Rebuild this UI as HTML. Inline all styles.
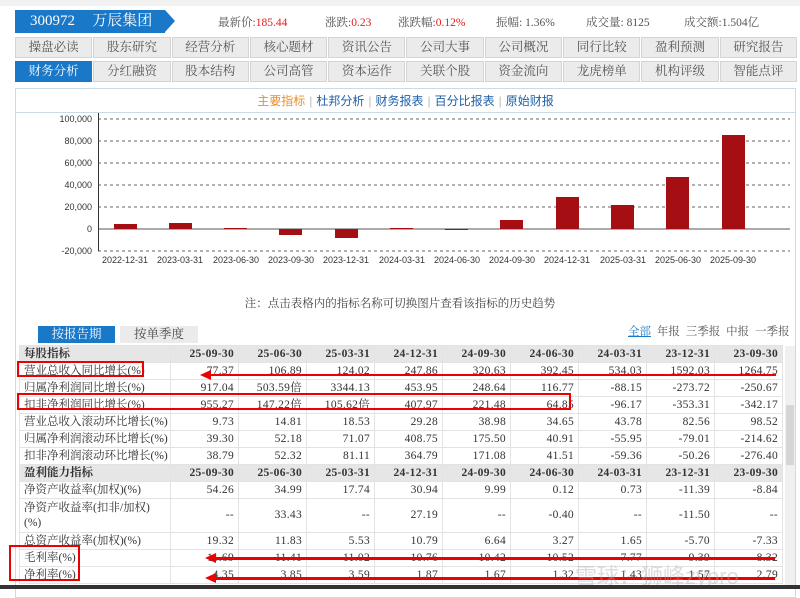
<!DOCTYPE html>
<html><head><meta charset="utf-8"><style>
*{margin:0;padding:0;box-sizing:border-box}
body{width:800px;height:589px;overflow:hidden;background:#fff;font-family:"Liberation Serif","Noto Serif CJK SC","Noto Sans CJK SC",serif;font-size:11px;color:#333;position:relative}
.abs{position:absolute}
.top{left:0;top:0;width:800px;height:6px;background:#f2f2f2}
.code{left:15px;top:10px;width:150px;height:23px;background:#1a78c8;color:#fff;font-size:15px;line-height:23px;padding-left:15px;word-spacing:2px}
.code:after{content:"";position:absolute;right:-10px;top:0;border-left:10px solid #1a78c8;border-top:11.5px solid transparent;border-bottom:11.5px solid transparent}
.stat{top:14px;font-size:11.5px;color:#555}
.stat b{font-weight:normal;color:#e02020}
.nav{left:15px;width:782px;display:flex;gap:1px}
.nav div{flex:1;height:21px;background:#ebebeb;border:1px solid #d4d4d4;text-align:center;line-height:19px;font-size:12.5px;color:#555}
.nav div.on{background:#1a78c8;color:#fff;border-color:#1a78c8}
.panel{left:15px;top:88px;width:781px;height:510px;border:1px solid #c8dbe6}
.tabs{left:16px;top:89px;width:779px;height:24px;border-bottom:1px solid #c8dbe6;text-align:center;line-height:24px;font-size:12px;color:#1d5fa8;font-family:"Liberation Sans","Noto Sans CJK SC",sans-serif}
.tabs .o{color:#f08c1e}.tabs .s{color:#bbb;margin:0 4px}
table{position:absolute;left:19px;top:345px;border-collapse:collapse;width:764px;table-layout:fixed}
td{height:17px;border:1px solid #e3e3e3;padding:0 4px;text-align:right;white-space:nowrap;font-size:11.5px;line-height:15px;letter-spacing:0.3px}
td:first-child{text-align:left;letter-spacing:0}
tr.h td{background:#e6e6e6;font-weight:bold;color:#333}
tr.t td{height:34px}
.red{border:2px solid #e00;position:absolute}
.arr{position:absolute;height:3px;background:#e00}
.arr:before{content:"";position:absolute;left:-10px;top:-4px;border-right:11px solid #e00;border-top:5.5px solid transparent;border-bottom:5.5px solid transparent}
</style></head><body>
<div class="abs top"></div>
<div class="abs code">300972&nbsp;&nbsp;&nbsp;万辰集团</div>
<div class="abs stat" style="left:218px">最新价:<b>185.44</b></div>
<div class="abs stat" style="left:325px">涨跌:<b>0.23</b></div>
<div class="abs stat" style="left:398px">涨跌幅:<b>0.12%</b></div>
<div class="abs stat" style="left:496px">振幅: 1.36%</div>
<div class="abs stat" style="left:586px">成交量: 8125</div>
<div class="abs stat" style="left:684px">成交额:1.504亿</div>
<div class="abs nav" style="top:37px"><div>操盘必读</div><div>股东研究</div><div>经营分析</div><div>核心题材</div><div>资讯公告</div><div>公司大事</div><div>公司概况</div><div>同行比较</div><div>盈利预测</div><div>研究报告</div></div>
<div class="abs nav" style="top:61px"><div class="on">财务分析</div><div>分红融资</div><div>股本结构</div><div>公司高管</div><div>资本运作</div><div>关联个股</div><div>资金流向</div><div>龙虎榜单</div><div>机构评级</div><div>智能点评</div></div>
<div class="abs panel"></div>
<div class="abs tabs"><span class="o">主要指标</span><span class="s">|</span>杜邦分析<span class="s">|</span>财务报表<span class="s">|</span>百分比报表<span class="s">|</span>原始财报</div>
<svg class="abs" style="left:0;top:113px" width="800" height="160" font-family="Liberation Sans, sans-serif" font-size="9" fill="#333">
<g stroke="#333" stroke-dasharray="3,3" stroke-width="0.8">
<line x1="98" y1="6" x2="790" y2="6"/><line x1="98" y1="28" x2="790" y2="28"/><line x1="98" y1="50" x2="790" y2="50"/><line x1="98" y1="72" x2="790" y2="72"/><line x1="98" y1="94" x2="790" y2="94"/><line x1="98" y1="138" x2="790" y2="138"/></g>
<line x1="98" y1="116" x2="790" y2="116" stroke="#555"/>
<line x1="98.5" y1="0" x2="98.5" y2="138" stroke="#333"/>
<g text-anchor="end"><text x="92" y="9">100,000</text><text x="92" y="31">80,000</text><text x="92" y="53">60,000</text><text x="92" y="75">40,000</text><text x="92" y="97">20,000</text><text x="92" y="119">0</text><text x="92" y="141">-20,000</text></g>
<g fill="#a50f14">
<rect x="114" y="111" width="23" height="5"/><rect x="169" y="110" width="23" height="6"/><rect x="224" y="115" width="23" height="1"/><rect x="279" y="116" width="23" height="6"/><rect x="335" y="116" width="23" height="9"/><rect x="390" y="115" width="23" height="1"/><rect x="445" y="116" width="23" height="1"/><rect x="500" y="107" width="23" height="9"/><rect x="556" y="84" width="23" height="32"/><rect x="611" y="92" width="23" height="24"/><rect x="666" y="64" width="23" height="52"/><rect x="722" y="22" width="23" height="94"/></g>
<g text-anchor="middle"><text x="125" y="150">2022-12-31</text><text x="180" y="150">2023-03-31</text><text x="236" y="150">2023-06-30</text><text x="291" y="150">2023-09-30</text><text x="346" y="150">2023-12-31</text><text x="402" y="150">2024-03-31</text><text x="457" y="150">2024-06-30</text><text x="512" y="150">2024-09-30</text><text x="567" y="150">2024-12-31</text><text x="623" y="150">2025-03-31</text><text x="678" y="150">2025-06-30</text><text x="733" y="150">2025-09-30</text></g>
</svg>
<div class="abs" style="left:0;width:800px;top:295px;text-align:center;font-size:11.5px;color:#444">注：点击表格内的指标名称可切换图片查看该指标的历史趋势</div>
<div class="abs" style="left:38px;top:326px;width:77px;height:17px;background:#1a78c8;color:#fff;text-align:center;line-height:17px;font-size:12.5px">按报告期</div>
<div class="abs" style="left:120px;top:326px;width:78px;height:17px;background:#ebebeb;color:#444;text-align:center;line-height:17px;font-size:12.5px">按单季度</div>
<div class="abs" style="left:628px;top:323px;font-size:11.5px;color:#555;word-spacing:3px"><span style="color:#1a78c8;text-decoration:underline">全部</span> 年报 三季报 中报 一季报</div>
<table>
<colgroup><col style="width:151px"><col span="9" style="width:68px"></colgroup>
<tr class="h"><td>每股指标</td><td>25-09-30</td><td>25-06-30</td><td>25-03-31</td><td>24-12-31</td><td>24-09-30</td><td>24-06-30</td><td>24-03-31</td><td>23-12-31</td><td>23-09-30</td></tr>
<tr><td>营业总收入同比增长(%)</td><td>77.37</td><td>106.89</td><td>124.02</td><td>247.86</td><td>320.63</td><td>392.45</td><td>534.03</td><td>1592.03</td><td>1264.75</td></tr>
<tr><td>归属净利润同比增长(%)</td><td>917.04</td><td>503.59倍</td><td>3344.13</td><td>453.95</td><td>248.64</td><td>116.77</td><td>-88.15</td><td>-273.72</td><td>-250.67</td></tr>
<tr><td>扣非净利润同比增长(%)</td><td>955.27</td><td>147.22倍</td><td>105.62倍</td><td>407.97</td><td>221.48</td><td>64.85</td><td>-96.17</td><td>-353.31</td><td>-342.17</td></tr>
<tr><td>营业总收入滚动环比增长(%)</td><td>9.73</td><td>14.81</td><td>18.53</td><td>29.28</td><td>38.98</td><td>34.65</td><td>43.78</td><td>82.56</td><td>98.52</td></tr>
<tr><td>归属净利润滚动环比增长(%)</td><td>39.30</td><td>52.18</td><td>71.07</td><td>408.75</td><td>175.50</td><td>40.91</td><td>-55.95</td><td>-79.01</td><td>-214.62</td></tr>
<tr><td>扣非净利润滚动环比增长(%)</td><td>38.79</td><td>52.32</td><td>81.11</td><td>364.79</td><td>171.08</td><td>41.51</td><td>-59.36</td><td>-50.26</td><td>-276.40</td></tr>
<tr class="h"><td>盈利能力指标</td><td>25-09-30</td><td>25-06-30</td><td>25-03-31</td><td>24-12-31</td><td>24-09-30</td><td>24-06-30</td><td>24-03-31</td><td>23-12-31</td><td>23-09-30</td></tr>
<tr><td>净资产收益率(加权)(%)</td><td>54.26</td><td>34.99</td><td>17.74</td><td>30.94</td><td>9.99</td><td>0.12</td><td>0.73</td><td>-11.39</td><td>-8.84</td></tr>
<tr class="t"><td style="white-space:normal">净资产收益率(扣非/加权)(%)</td><td>--</td><td>33.43</td><td>--</td><td>27.19</td><td>--</td><td>-0.40</td><td>--</td><td>-11.50</td><td>--</td></tr>
<tr><td>总资产收益率(加权)(%)</td><td>19.32</td><td>11.83</td><td>5.53</td><td>10.79</td><td>6.64</td><td>3.27</td><td>1.65</td><td>-5.70</td><td>-7.33</td></tr>
<tr><td>毛利率(%)</td><td>11.69</td><td>11.41</td><td>11.02</td><td>10.76</td><td>10.42</td><td>10.52</td><td>7.77</td><td>9.39</td><td>8.32</td></tr>
<tr><td>净利率(%)</td><td>4.35</td><td>3.85</td><td>3.59</td><td>1.87</td><td>1.67</td><td>1.32</td><td>1.43</td><td>1.57</td><td>2.79</td></tr>
</table>
<div class="abs" style="left:785px;top:346px;width:10px;height:240px;background:#f0f0f0"></div>
<div class="abs" style="left:786px;top:405px;width:8px;height:60px;background:#d6d6d6"></div>
<div class="red" style="left:17px;top:361px;width:127px;height:16px"></div>
<div class="red" style="left:17px;top:393px;width:554px;height:17px"></div>
<div class="red" style="left:9px;top:545px;width:71px;height:36px"></div>
<div class="arr" style="left:210px;top:374px;width:566px;height:2px"></div>
<div class="arr" style="left:215px;top:557px;width:560px"></div>
<div class="arr" style="left:215px;top:577px;width:560px"></div>
<div class="abs" style="left:575px;top:559px;font-size:22px;color:rgba(170,170,170,0.4);font-family:'Liberation Sans','Noto Sans CJK SC',sans-serif">雪球：狮峰zypro</div>
<div class="abs" style="left:0;top:585px;width:800px;height:4px;background:#333"></div>
</body></html>
